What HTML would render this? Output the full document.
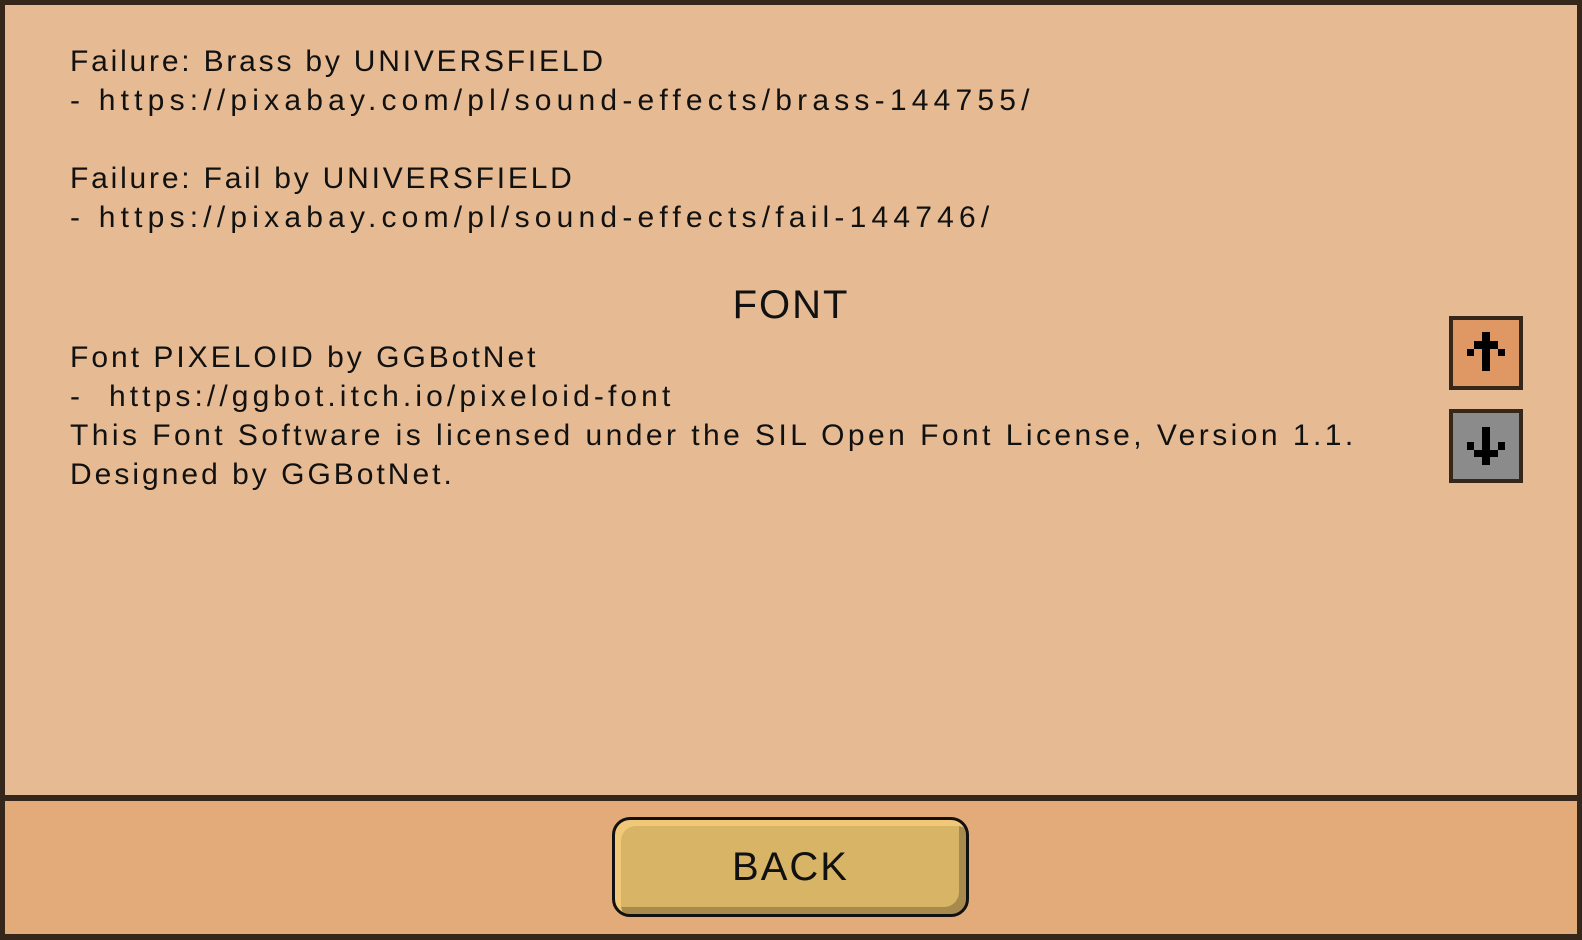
<!DOCTYPE html>
<html><head><meta charset="utf-8"><style>
html,body{margin:0;padding:0}
body{width:1582px;height:940px;position:relative;overflow:hidden;background:#35281a;font-family:"Liberation Sans",sans-serif;color:#111}
#top{position:absolute;left:5px;top:5px;width:1572px;height:790px;background:#e6bb93}
#bot{position:absolute;left:5px;top:801px;width:1572px;height:133px;background:#e3aa7a}
.t{position:absolute;left:65px;font-size:30px;letter-spacing:3px;line-height:39px;white-space:pre}
.t span{display:block}
.u{letter-spacing:5.2px}
.h{position:absolute;left:0;width:1572px;text-align:center;top:278px;font-size:40px;letter-spacing:2px}
.btn{position:absolute;width:74px;height:74px;border:4px solid #35281a;box-sizing:border-box}
.btn svg{position:absolute;left:-4px;top:-4px}
#back{position:absolute;left:612px;top:817px;width:357px;height:100px;box-sizing:border-box;border:3px solid #111;border-radius:18px;background:#d8b466;box-shadow:inset 6px 6px 0 #f0c878,inset -7px -7px 0 #a98a4e;text-align:center;line-height:94px;font-size:40px;letter-spacing:2px}
</style></head><body>
<div id="top">
<div class="t" style="top:37px"><span style="letter-spacing:2.8px">Failure: Brass by UNIVERSFIELD</span><span class="u">- https://pixabay.com/pl/sound-effects/brass-144755/</span></div>
<div class="t" style="top:154px"><span style="letter-spacing:2.8px">Failure: Fail by UNIVERSFIELD</span><span class="u">- https://pixabay.com/pl/sound-effects/fail-144746/</span></div>
<div class="h">FONT</div>
<div class="t" style="top:333px"><span>Font PIXELOID by GGBotNet</span><span style="letter-spacing:4.1px">-  https://ggbot.itch.io/pixeloid-font</span><span style="letter-spacing:3.45px">This Font Software is licensed under the SIL Open Font License, Version 1.1.</span><span>Designed by GGBotNet.</span></div>
</div>
<div class="btn" style="left:1449px;top:316px;background:#df9763"><svg width="74" height="74" viewBox="0 0 74 74"><rect x="33" y="16" width="8" height="39" fill="#000"/><rect x="25" y="25" width="24" height="8" fill="#000"/><rect x="18" y="33" width="7" height="7" fill="#000"/><rect x="49" y="33" width="7" height="7" fill="#000"/></svg></div>
<div class="btn" style="left:1449px;top:409px;background:#8b8b8b"><svg width="74" height="74" viewBox="0 0 74 74"><rect x="33" y="18" width="8" height="38" fill="#000"/><rect x="25" y="41" width="24" height="7" fill="#000"/><rect x="18" y="33" width="7" height="8" fill="#000"/><rect x="49" y="33" width="7" height="8" fill="#000"/></svg></div>
<div id="bot"></div>
<div id="back">BACK</div>
</body></html>
